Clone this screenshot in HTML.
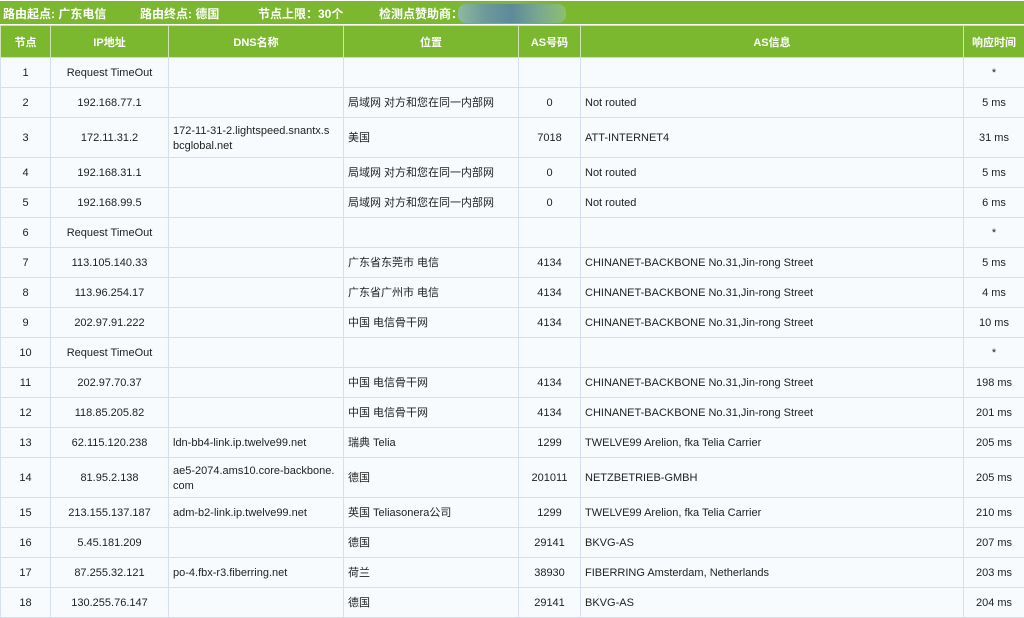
<!DOCTYPE html>
<html><head><meta charset="utf-8"><style>
body{margin:0;width:1024px;height:615px;overflow:hidden;background:#fff;font-family:"Liberation Sans","Noto Sans CJK SC",sans-serif;font-size:11px;color:#222}
.top{position:absolute;left:0;top:1px;width:1024px;height:23px;background:#7cb82f;color:#fff;font-weight:bold;font-size:12px}
.top span{position:absolute;top:4px}
.blur{position:absolute;left:458px;top:3px;width:108px;height:19px;border-radius:8px;background:linear-gradient(90deg,#8fb9a0,#6d9a9a,#5d8a9a,#7aa890,#8cbf70)}
table{position:absolute;left:0;top:25px;border-collapse:collapse;table-layout:fixed;width:1024px}
th{background:#7cb82f;color:#fff;font-weight:bold;height:31px;border:1px solid #cfe3b5;font-size:11px;padding:0}
td{background:#f7fbfd;border:1px solid #d3e0ee;height:27px;padding:2px 4px 0;text-align:center;line-height:15px}
td.l{text-align:left}
tr.t td{height:37px}
</style></head><body>
<div class="top"><span style="left:3px">路由起点: 广东电信</span><span style="left:140px">路由终点: 德国</span><span style="left:258px">节点上限：30个</span><span style="left:379px">检测点赞助商：</span><div class="blur"></div></div>
<table>
<colgroup><col style="width:50px"><col style="width:118px"><col style="width:175px"><col style="width:175px"><col style="width:62px"><col style="width:383px"><col style="width:61px"></colgroup>
<tr><th>节点</th><th>IP地址</th><th>DNS名称</th><th>位置</th><th>AS号码</th><th>AS信息</th><th>响应时间</th></tr>
<tr><td>1</td><td>Request TimeOut</td><td></td><td></td><td></td><td></td><td>*</td></tr>
<tr><td>2</td><td>192.168.77.1</td><td></td><td class="l">局域网 对方和您在同一内部网</td><td>0</td><td class="l">Not routed</td><td>5 ms</td></tr>
<tr class="t"><td>3</td><td>172.11.31.2</td><td class="l">172-11-31-2.lightspeed.snantx.s bcglobal.net</td><td class="l">美国</td><td>7018</td><td class="l">ATT-INTERNET4</td><td>31 ms</td></tr>
<tr><td>4</td><td>192.168.31.1</td><td></td><td class="l">局域网 对方和您在同一内部网</td><td>0</td><td class="l">Not routed</td><td>5 ms</td></tr>
<tr><td>5</td><td>192.168.99.5</td><td></td><td class="l">局域网 对方和您在同一内部网</td><td>0</td><td class="l">Not routed</td><td>6 ms</td></tr>
<tr><td>6</td><td>Request TimeOut</td><td></td><td></td><td></td><td></td><td>*</td></tr>
<tr><td>7</td><td>113.105.140.33</td><td></td><td class="l">广东省东莞市 电信</td><td>4134</td><td class="l">CHINANET-BACKBONE No.31,Jin-rong Street</td><td>5 ms</td></tr>
<tr><td>8</td><td>113.96.254.17</td><td></td><td class="l">广东省广州市 电信</td><td>4134</td><td class="l">CHINANET-BACKBONE No.31,Jin-rong Street</td><td>4 ms</td></tr>
<tr><td>9</td><td>202.97.91.222</td><td></td><td class="l">中国 电信骨干网</td><td>4134</td><td class="l">CHINANET-BACKBONE No.31,Jin-rong Street</td><td>10 ms</td></tr>
<tr><td>10</td><td>Request TimeOut</td><td></td><td></td><td></td><td></td><td>*</td></tr>
<tr><td>11</td><td>202.97.70.37</td><td></td><td class="l">中国 电信骨干网</td><td>4134</td><td class="l">CHINANET-BACKBONE No.31,Jin-rong Street</td><td>198 ms</td></tr>
<tr><td>12</td><td>118.85.205.82</td><td></td><td class="l">中国 电信骨干网</td><td>4134</td><td class="l">CHINANET-BACKBONE No.31,Jin-rong Street</td><td>201 ms</td></tr>
<tr><td>13</td><td>62.115.120.238</td><td class="l">ldn-bb4-link.ip.twelve99.net</td><td class="l">瑞典 Telia</td><td>1299</td><td class="l">TWELVE99 Arelion, fka Telia Carrier</td><td>205 ms</td></tr>
<tr class="t"><td>14</td><td>81.95.2.138</td><td class="l">ae5-2074.ams10.core-backbone. com</td><td class="l">德国</td><td>201011</td><td class="l">NETZBETRIEB-GMBH</td><td>205 ms</td></tr>
<tr><td>15</td><td>213.155.137.187</td><td class="l">adm-b2-link.ip.twelve99.net</td><td class="l">英国 Teliasonera公司</td><td>1299</td><td class="l">TWELVE99 Arelion, fka Telia Carrier</td><td>210 ms</td></tr>
<tr><td>16</td><td>5.45.181.209</td><td></td><td class="l">德国</td><td>29141</td><td class="l">BKVG-AS</td><td>207 ms</td></tr>
<tr><td>17</td><td>87.255.32.121</td><td class="l">po-4.fbx-r3.fiberring.net</td><td class="l">荷兰</td><td>38930</td><td class="l">FIBERRING Amsterdam, Netherlands</td><td>203 ms</td></tr>
<tr><td>18</td><td>130.255.76.147</td><td></td><td class="l">德国</td><td>29141</td><td class="l">BKVG-AS</td><td>204 ms</td></tr>
</table>
</body></html>
